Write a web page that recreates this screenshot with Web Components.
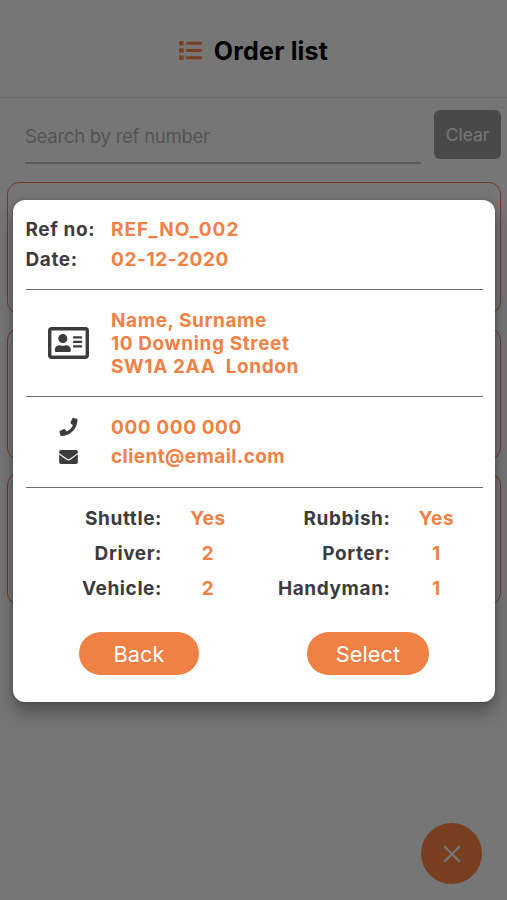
<!DOCTYPE html>
<html lang="en">
<head>
<meta charset="utf-8">
<title>Order list</title>
<style>
html,body{margin:0;height:100%;overflow:hidden}
body{font-family:Inter,"Liberation Sans",sans-serif;background:#ededed}
</style>
</head>
<body>
<order-app></order-app>
<script>
const define = (name, html) => {
  const t = document.createElement('template');
  t.innerHTML = html;
  customElements.define(name, class extends HTMLElement {
    constructor() {
      super();
      this.attachShadow({ mode: 'open' }).append(t.content.cloneNode(true));
    }
  });
};

const icons = {
  list: ['0 0 512 512', '<rect y="44" width="104" height="100" rx="16"/><rect y="206" width="104" height="100" rx="16"/><rect y="368" width="104" height="100" rx="16"/><rect x="160" y="60" width="352" height="70" rx="16"/><rect x="160" y="221" width="352" height="70" rx="16"/><rect x="160" y="382" width="352" height="70" rx="16"/>'],
  card: ['0 32 576 448', '<path d="M528 32H48C21.500 32 0 53.500 0 80v352c0 26.500 21.500 48 48 48h480c26.500 0 48-21.500 48-48V80c0-26.500-21.500-48-48-48zm0 400H48V80h480v352zM208 256c35.300 0 64-28.700 64-64s-28.700-64-64-64-64 28.700-64 64 28.700 64 64 64zm-89.600 128h179.200c12.400 0 22.400-8.600 22.400-19.200v-19.200c0-31.800-30.100-57.600-67.200-57.600-10.800 0-18.700 8-44.800 8-26.900 0-33.400-8-44.800-8-37.100 0-67.200 25.800-67.200 57.600v19.200c0 10.600 10 19.200 22.400 19.200z"/><rect x="352" y="160" width="128" height="32" rx="8"/><rect x="352" y="224" width="128" height="32" rx="8"/><rect x="352" y="288" width="128" height="32" rx="8"/>'],
  phone: ['0 0 512 512', '<path d="M493.4 24.6l-104-24c-11.3-2.6-22.9 3.3-27.5 13.9l-48 112c-4.2 9.8-1.4 21.3 6.9 28l60.6 49.6c-36 76.700-98.900 140.500-177.200 177.200l-49.600-60.600c-6.800-8.300-18.200-11.100-28-6.900l-112 48C3.900 366.500-2 378.100.6 389.400l24 104C27.100 504.200 36.700 512 48 512c256.100 0 464-207.500 464-464 0-11.200-7.700-20.900-18.600-23.400z"/>'],
  mail: ['0 64 512 384', '<path d="M502.300 190.800c3.900-3.100 9.700-.2 9.700 4.700V400c0 26.500-21.500 48-48 48H48c-26.500 0-48-21.500-48-48V195.600c0-5 5.700-7.800 9.700-4.700 22.400 17.400 52.100 39.500 154.100 113.600 21.100 15.400 56.700 47.800 92.200 47.600 35.700.3 72-32.800 92.300-47.600 102-74.100 131.600-96.300 154-113.700zM256 320c23.200.4 56.600-29.200 73.400-41.400 132.700-96.300 142.800-104.700 173.400-128.700 5.800-4.500 9.200-11.500 9.200-18.900v-19c0-26.500-21.500-48-48-48H48c-26.500 0-48 21.500-48 48v19c0 7.400 3.400 14.300 9.200 18.900 30.600 23.900 40.700 32.400 173.400 128.700 16.800 12.200 50.200 41.800 73.400 41.400z"/>'],
  close: ['0 0 18 18', '<path d="M1.200 1.200l15.600 15.600M16.800 1.200l-15.600 15.600" fill="none" stroke="currentColor" stroke-width="2.300"/>']
};
customElements.define('ui-icon', class extends HTMLElement {
  constructor() {
    super();
    this.attachShadow({ mode: 'open' });
  }
  connectedCallback() {
    const [box, body] = icons[this.getAttribute('name')];
    this.shadowRoot.innerHTML = `<style>:host{display:block;flex:none}svg{display:block;width:100%;height:100%;fill:currentColor}</style><svg viewBox="${box}">${body}</svg>`;
  }
});

define('app-header', `<style>
:host{display:flex;height:98px;box-sizing:border-box;padding-top:4px;border-bottom:1px solid #d6d6d6;align-items:center;justify-content:center;font-size:25px;font-weight:650;letter-spacing:.2px;color:#000}
ui-icon{width:23px;height:23px;color:#ef8145;margin-right:12px}
</style><ui-icon name="list"></ui-icon><slot></slot>`);

define('search-bar', `<style>
:host{display:flex;height:84px;box-sizing:border-box;padding:12px 6px 0 25px;align-items:flex-start}
.field{width:396px;height:54px;box-sizing:border-box;border-bottom:2px solid #b4b4b4;color:#a8a8a8;font-size:18.500px;line-height:52px;letter-spacing:-.25px}
.clear{margin-left:auto;width:67px;height:49px;border-radius:6px;background:#929292;color:#eee;font-size:17.500px;line-height:49px;text-align:center;letter-spacing:-.1px}
</style><div class="field">Search by ref number</div><div class="clear">Clear</div>`);

define('order-card', `<style>
:host{display:block;height:132px;box-sizing:border-box;border:1.500px solid #d8794a;border-radius:12px}
</style><slot></slot>`);

define('round-button', `<style>
:host{display:flex;align-items:center;justify-content:center;width:61px;height:61px;border-radius:50%;background:#ef7f3f;color:#eee}
ui-icon{width:18px;height:18px}
</style><ui-icon name="close"></ui-icon>`);

define('pill-button', `<style>
:host{display:block;height:43px;border-radius:22px;background:#ef8145;color:#fff;font-size:21.700px;line-height:44px;text-align:center;letter-spacing:.1px}
</style><slot></slot>`);

define('info-row', `<style>
:host{display:grid;grid-template-columns:85.500px 1fr;align-items:center;min-height:29.500px}
.value{color:#ef8145}
</style><slot name="label"></slot><div class="value"><slot></slot></div>`);

define('modal-section', `<style>
:host{display:block;box-sizing:border-box;border-bottom:1.500px solid #6c6c6c}
</style><slot></slot>`);

define('count-item', `<style>
:host{display:grid;grid-template-columns:1fr 92px;line-height:35.300px}
.label{text-align:right}
.value{color:#ef8145;text-align:center}
</style><div class="label"><slot name="label"></slot></div><div class="value"><slot></slot></div>`);

define('order-modal', `<style>
:host{display:block;box-sizing:border-box;width:482px;height:502px;padding:15px 12.500px 0;border-radius:12px;background:#fff;box-shadow:0 10px 18px rgba(0,0,0,.34),0 0 4px rgba(0,0,0,.2);color:#3c3c3e;font-size:19px;font-weight:650;letter-spacing:.6px}
.ref{height:75px}
.address{height:107px;padding-top:18.500px;line-height:23.200px;white-space:pre}
.contact{height:91px;padding-top:15.500px}
.card{width:41px;height:32px;margin-left:22px}
.phone{width:19px;height:18px;margin-left:33px}
.mail{width:19px;height:14px;margin-left:33px}
.counts{display:grid;grid-template-columns:1fr 1fr;padding-top:12.500px}
.actions{display:flex;padding:26px 53.500px 0;justify-content:space-between;font-weight:400}
</style>
<modal-section class="ref"><info-row><span slot="label">Ref no:</span><span style="letter-spacing:1px">REF_NO_002</span></info-row><info-row><span slot="label">Date:</span>02-12-2020</info-row></modal-section>
<modal-section class="address"><info-row><ui-icon slot="label" class="card" name="card"></ui-icon><div>Name, Surname</div><div>10 Downing Street</div><div>SW1A 2AA  London</div></info-row></modal-section>
<modal-section class="contact"><info-row><ui-icon slot="label" class="phone" name="phone"></ui-icon>000 000 000</info-row><info-row><ui-icon slot="label" class="mail" name="mail"></ui-icon><span style="letter-spacing:.42px">client@email.com</span></info-row></modal-section>
<div class="counts"><count-item><span slot="label">Shuttle:</span>Yes</count-item><count-item><span slot="label">Rubbish:</span>Yes</count-item><count-item><span slot="label">Driver:</span>2</count-item><count-item><span slot="label">Porter:</span>1</count-item><count-item><span slot="label">Vehicle:</span>2</count-item><count-item><span slot="label">Handyman:</span>1</count-item></div>
<div class="actions"><pill-button style="width:120px">Back</pill-button><pill-button style="width:122px">Select</pill-button></div>`);

define('order-app', `<style>
:host{display:block;position:relative;height:900px;overflow:hidden;background:#ededed}
.cards{display:grid;gap:13.500px;padding:0 6px 0 7px}
round-button{position:absolute;right:25px;bottom:16px}
.overlay{position:absolute;inset:0;background:rgba(0,0,0,.5);padding:200px 0 0 13px}
</style>
<app-header>Order list</app-header>
<search-bar></search-bar>
<div class="cards"><order-card></order-card><order-card></order-card><order-card></order-card></div>
<round-button></round-button>
<div class="overlay"><order-modal></order-modal></div>`);
</script>
</body>
</html>
